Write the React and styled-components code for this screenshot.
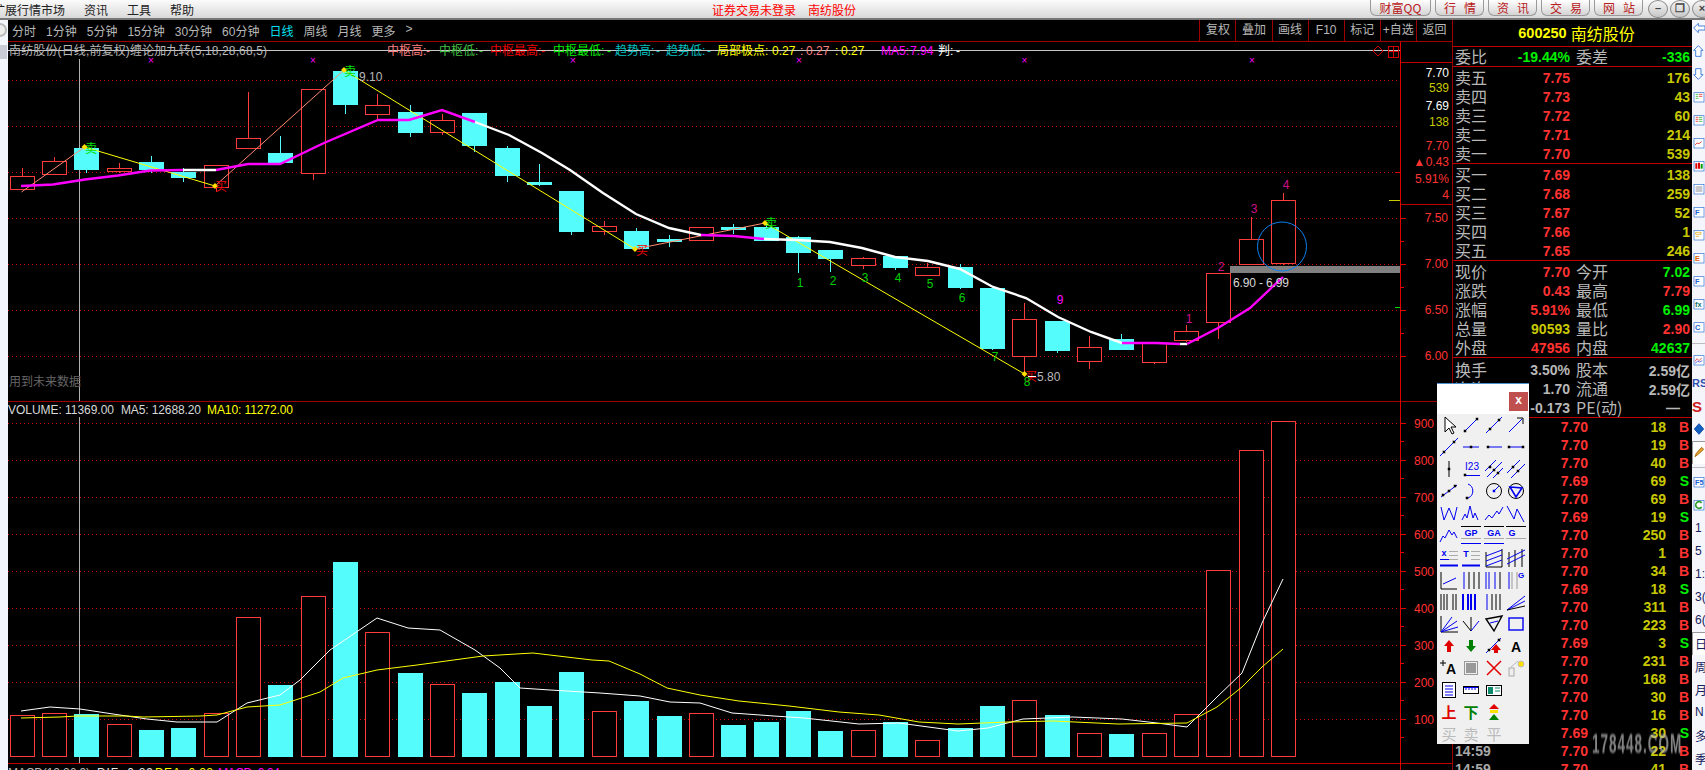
import React from 'react';
import styled, { createGlobalStyle } from 'styled-components';

const NUM = '"Liberation Sans", "Noto Sans CJK SC", sans-serif';
const CJK = '"Noto Sans CJK SC", "Liberation Sans", sans-serif';
const RED = '#ff3232';
const YEL = '#c8c800';
const GRN = '#00f000';
const GRY = '#b8b8b8';

const Global = createGlobalStyle`
  html, body { margin: 0; padding: 0; background: #000; overflow: hidden; }
`;
const Screen = styled.div`
  position: relative;
  width: 1705px;
  height: 770px;
  overflow: hidden;
  display: flex;
  flex-direction: column;
  font-family: ${CJK};
  background: #000;
`;

/* window title bar */
const TopBar = styled.div`
  flex: none;
  height: 18px;
  border-bottom: 2px solid #777;
  background: linear-gradient(#fbfbfb, #d9d9d9);
  display: flex;
  align-items: center;
  font-size: 12px;
  color: #222;
  white-space: nowrap;
`;
const Menu = styled.div`
  display: flex;
  gap: 19px;
  margin-left: -7px;
`;
const Notice = styled.div`
  display: flex;
  gap: 12px;
  margin-left: 518px;
  color: #f00;
`;
const TopLinks = styled.div`
  margin-left: auto;
  margin-right: -7px;
  display: flex;
  align-items: flex-start;
  align-self: flex-start;
  gap: 4px;
`;
const Pill = styled.div`
  width: ${p => p.$w || 49}px;
  height: 16px;
  box-sizing: border-box;
  border: 1px solid #999;
  border-top: 0;
  border-radius: 0 0 6px 6px;
  background: linear-gradient(#fff, #d4d4d4);
  color: #b82020;
  text-align: center;
  line-height: 15px;
  letter-spacing: ${p => p.$sp || 0}px;
  text-indent: ${p => p.$sp || 0}px;
`;
const Round = styled.div`
  width: 20px;
  height: 18px;
  box-sizing: border-box;
  margin-left: ${p => p.$ml || 0}px;
  border: 1px solid #888;
  border-radius: 50%;
  background: linear-gradient(#f4f4f4, #c8c8c8);
  color: #444;
  font: bold 11px/15px ${NUM}, ${CJK};
  text-align: center;
`;

const Body = styled.div`
  flex: 1;
  min-height: 0;
  display: flex;
`;
const LeftStrip = styled.div`
  flex: none;
  width: 8px;
  background: #f3f6fd;
  display: flex;
  flex-direction: column;
  gap: 8px;
  padding-top: 3px;
  overflow: hidden;
`;
const StripKnob = styled.div`
  width: 14px;
  height: 14px;
  margin-left: -7px;
  box-sizing: border-box;
  border: 2px solid #bbb;
  border-radius: 50%;
  background: #eee;
`;
const StripTab = styled.div`
  width: 7px;
  height: 14px;
  background: #c9ccd6;
`;

const Main = styled.div`
  flex: none;
  width: 1444px;
  display: flex;
  flex-direction: column;
`;
const PeriodBar = styled.div`
  flex: none;
  height: 21px;
  border-bottom: 1px solid #a00000;
  display: flex;
  align-items: center;
  font-size: 12px;
  color: ${GRY};
  white-space: nowrap;
`;
const Periods = styled.div`
  display: flex;
  gap: 10px;
  padding-left: 4px;
`;
const Period = styled.span`
  color: ${p => (p.$on ? '#00e0f0' : GRY)};
  font-family: ${NUM}, ${CJK};
`;
const Actions = styled.div`
  margin-left: auto;
  display: flex;
  height: 100%;
`;
const Action = styled.div`
  width: 36.1px;
  box-sizing: border-box;
  border-left: 1px solid #a00000;
  text-align: center;
  line-height: 21px;
  font-family: ${NUM}, ${CJK};
`;
const ChartSvg = styled.svg`
  flex: none;
  display: block;
  width: 1444px;
  height: 728px;
`;

/* quote panel */
const Panel = styled.div`
  flex: none;
  width: 240px;
  box-sizing: border-box;
  border-left: 1px solid #a00000;
  display: flex;
  flex-direction: column;
  font-size: 16px;
  color: ${GRY};
  white-space: nowrap;
`;
const Title = styled.div`
  flex: none;
  height: 26px;
  border-bottom: 1px solid #c00000;
  display: flex;
  align-items: center;
  justify-content: center;
  gap: 4px;
  padding-left: 8px;
  color: #ffff00;
`;
const Code = styled.span`
  font: bold 14.5px ${NUM};
`;
const Section = styled.div`
  flex: none;
  border-bottom: 1px solid #c00000;
  padding-top: ${p => p.$pad || 0}px;
`;
const QuoteRow = styled.div`
  height: 19px;
  display: flex;
  align-items: center;
  padding: 0 2px 0 2px;
`;
const Label = styled.span`
  flex: none;
  width: 32px;
  line-height: 19px;
`;
const Value = styled.span`
  flex: none;
  width: ${p => p.$w || 83}px;
  text-align: right;
  font: bold 14px ${NUM}, ${CJK};
  color: ${p => p.$c};
  margin-right: 6px;
`;
const Value2 = styled.span`
  flex: 1;
  text-align: right;
  font: bold 14px ${NUM}, ${CJK};
  color: ${p => p.$c};
  padding-right: ${p => p.$pr || 0}px;
`;
const Trades = styled.div`
  flex: 1;
  overflow: hidden;
`;
const TradeRow = styled.div`
  height: 18px;
  display: grid;
  grid-template-columns: 133px 78px 23px;
  padding-left: 2px;
  align-items: center;
  font: bold 14px ${NUM};
  text-align: right;
`;
const Time = styled.span`
  display: flex;
  justify-content: space-between;
  color: #a8a8a8;
`;
const Price = styled.b`
  color: ${RED};
`;
const Vol = styled.b`
  color: ${YEL};
`;
const Flag = styled.b`
  color: ${p => (p.$s ? GRN : RED)};
`;

/* right tool strip */
const RightBar = styled.div`
  flex: none;
  width: 13px;
  box-sizing: border-box;
  background: #f4f6fb;
  overflow: hidden;
  display: flex;
  flex-direction: column;
  & > :first-child { margin-top: -3.5px; }
`;
const Strip = styled.div`
  flex: none;
  height: 23px;
  display: flex;
  align-items: center;
  padding-left: ${p => p.$pl ?? 1}px;
  font: 12px ${NUM}, ${CJK};
  color: #15205c;
  background: ${p => (p.$on ? '#fff' : 'transparent')};
  box-shadow: ${p => (p.$on ? 'inset 1px 1px 0 #999' : 'none')};
  white-space: nowrap;
`;
const StripText = styled.b`
  color: ${p => p.$c};
  font-size: ${p => p.$s}px;
`;
const StripGap = styled.div`
  flex: none;
  height: ${p => p.$h}px;
  display: flex;
  align-items: center;
  &::after {
    content: '';
    width: 100%;
    border-top: 1px solid #bbb;
  }
`;

/* floating drawing tools */
const ToolBox = styled.div`
  position: absolute;
  left: 1437px;
  top: 383px;
  width: 92px;
  height: 361px;
  background: #f0f0f0;
  border-top: 1px solid #4a90d0;
  box-sizing: border-box;
`;
const ToolHead = styled.div`
  height: 30px;
  background: #fff;
  display: flex;
  justify-content: flex-end;
  align-items: flex-end;
  padding-right: 1px;
  box-sizing: border-box;
  padding-bottom: 3px;
`;
const Close = styled.div`
  width: 19px;
  height: 19px;
  background: #c0504d;
  color: #fff;
  font: bold 12px/17px ${NUM};
  text-align: center;
`;
const ToolGrid = styled.div`
  display: grid;
  grid-template-columns: repeat(4, 22.4px);
  grid-auto-rows: 22.1px;
  padding-left: 1px;
`;
const ToolIcon = styled.svg`
  display: block;
  width: 22px;
  height: 22px;
`;
const Watermark = styled.div`
  position: absolute;
  left: 1592px;
  top: 731px;
  font: bold 27px/27px ${NUM};
  color: rgba(190, 190, 190, 0.7);
  letter-spacing: 2px;
  filter: blur(0.8px);
  transform: scaleX(0.5);
  transform-origin: left top;
  white-space: nowrap;
`;

/* ------ data ------ */
const cx = i => 21.5 + 32.35 * i;
// c = cyan body, [top, bottom, high, low]
const candles = [
  ['r', 176, 189, 168, 189], ['r', 161, 174, 157, 174], ['c', 148, 170, 148, 173], ['r', 168, 171, 163, 173],
  ['c', 162, 170, 156, 173], ['c', 172, 178, 168, 182], ['r', 165, 187, 165, 192], ['r', 138, 148, 92, 148],
  ['c', 153, 163, 136, 163], ['r', 89, 173, 89, 180], ['c', 71, 105, 71, 114], ['r', 105, 114, 94, 120],
  ['c', 112, 133, 105, 137], ['r', 120, 132, 114, 135], ['c', 113, 146, 113, 152], ['c', 148, 176, 146, 182],
  ['c', 182, 185, 164, 186], ['c', 191, 232, 191, 235], ['r', 226, 231, 221, 235], ['c', 231, 249, 228, 249],
  ['c', 239, 242, 235, 247], ['r', 227, 240, 227, 241], ['c', 227, 230, 224, 234], ['c', 227, 241, 224, 241],
  ['c', 237, 253, 236, 273], ['c', 250, 259, 250, 272], ['r', 258, 265, 257, 269], ['c', 256, 268, 256, 270],
  ['r', 267, 275, 263, 275], ['c', 267, 288, 264, 289], ['c', 288, 349, 288, 350], ['r', 319, 356, 303, 375],
  ['c', 321, 351, 321, 353], ['r', 347, 361, 336, 369], ['c', 339, 350, 334, 350], ['r', 343, 362, 343, 364],
  ['r', 331, 340, 325, 342], ['r', 273, 322, 273, 339], ['r', 239, 264, 217, 264], ['r', 200, 263, 193, 265],
];
const volTops = [
  715, 713, 714, 724, 730, 728, 713, 617, 685, 596, 562, 632, 673, 684, 693, 682, 706, 672, 711, 701,
  716, 713, 725, 722, 711, 731, 730, 722, 740, 728, 706, 700, 715, 733, 734, 733, 714, 570, 450, 421,
];
const maSegments = [
  ['#ff00ff', [[21, 186], [53, 184.5], [85, 179.5], [118, 175.5], [150, 170.5], [183, 170]]],
  ['#fff', [[183, 170], [216, 170]]],
  ['#ff00ff', [[216, 170], [248, 164], [280, 164], [324, 143], [378, 120], [409, 120], [442, 110], [475, 122]]],
  ['#fff', [[475, 122], [509, 135], [542, 153], [570, 170], [603, 193], [636, 214], [669, 228], [701, 235]]],
  ['#ff00ff', [[701, 235], [734, 236], [764, 239]]],
  ['#fff', [[764, 239], [797, 240], [830, 242], [862, 248], [895, 257], [928, 261], [960, 269], [993, 287], [1026, 298], [1058, 317], [1091, 332], [1122, 343]]],
  ['#ff00ff', [[1122, 343], [1156, 343], [1180, 344]]],
  ['#fff', [[1180, 344], [1187, 344]]],
  ['#ff00ff', [[1187, 344], [1218, 328], [1250, 308], [1283, 277]]],
];
const pivots = [[21.5, 192], [84.5, 147], [215, 186], [344, 70], [635, 249], [765, 223], [1024.5, 374]];
const volWhite = [[21, 711], [50, 707], [80, 709], [113, 714], [147, 719], [177, 722], [217, 722], [247, 703], [280, 695], [300, 680], [330, 650], [377, 618], [408, 628], [440, 630], [475, 650], [500, 668], [520, 688], [550, 690], [600, 693], [640, 696], [670, 702], [700, 703], [732, 713], [774, 716], [804, 718], [859, 724], [899, 723], [958, 731], [988, 728], [1023, 719], [1073, 717], [1122, 719], [1157, 723], [1187, 727], [1217, 697], [1242, 673], [1262, 623], [1283, 579]];
const volYellow = [[21, 718], [60, 717], [77, 716], [127, 716], [143, 717], [200, 716], [217, 715], [247, 707], [280, 705], [320, 692], [343, 678], [377, 670], [417, 665], [483, 656], [533, 653], [592, 660], [609, 661], [640, 674], [667, 688], [700, 695], [739, 701], [789, 706], [839, 712], [879, 715], [919, 722], [958, 724], [1008, 722], [1053, 721], [1118, 724], [1187, 723], [1217, 707], [1242, 687], [1262, 667], [1283, 649]];
const legend = [
  [387, '中枢高:', '#ff8080'], [426, '-', '#ff8080'], [439, '中枢低:', '#40c040'], [479, '-', '#40c040'],
  [490, '中枢最高:', '#f00000'], [541, '-', '#f00000'], [553, '中枢最低:', '#00f000'], [607, '-', '#00f000'],
  [615, '趋势高:', '#00c0c0'], [656, '-', '#00c0c0'], [666, '趋势低:', '#00c0c0'], [707, '-', '#00c0c0'],
  [717, '局部极点:', '#ffff00'], [772, '0.27', '#ffff00'], [800, ':', '#ff8080'], [806, '0.27', '#ff8080'], [835, ':', '#ffff00'], [841, '0.27', '#ffff00'],
  [881, 'MA5:', '#ff00ff'], [910, '7.94', '#ff00ff'], [938, '判:', '#ffffff'], [956, '-', '#ffffff'],
];
const marks = [
  [85, 153, '卖', '#00e000'], [344, 76, '卖', '#00e000'], [765, 228, '卖', '#00e000'],
  [215, 191, '买', '#f00000'], [636, 255, '买', '#f00000'], [1025, 381, '买', '#f00000'],
];
const pts = a => a.map(p => p.join(',')).join(' ');

const Dotted = ({ y }) => (
  <line x1="8" x2="1400" y1={y + 0.5} y2={y + 0.5} stroke="#c80000" strokeDasharray="1 3" shapeRendering="crispEdges" />
);
const Txt = ({ x, y, c = GRY, size = 12, anchor, len, children, family = NUM }) => (
  <text x={x} y={y} fill={c} fontSize={size} textAnchor={anchor} textLength={len} lengthAdjust="spacing" fontFamily={family}>{children}</text>
);
const Tick = ({ y, len }) => <line x1="1401" x2={1401 + len} y1={y + 0.5} y2={y + 0.5} stroke="#e00000" shapeRendering="crispEdges" />;

const Chart = () => (
  <ChartSvg viewBox="8 42 1444 728">
    <line x1="8" x2="1400" y1="50.5" y2="50.5" stroke="#c8c8c8" shapeRendering="crispEdges" />
    <Txt x={9} y={55} len={258}>南纺股份(日线,前复权)缠论加九转(5,18,28,68,5)</Txt>
    {legend.map(([x, t, c]) => <Txt key={x} x={x} y={55} c={c}>{t}</Txt>)}
    <path d="M1378 46l5 5-5 5-5-5z" fill="none" stroke="#d00000" />
    <path d="M1388.5 46.5h10v11h-10zM1393.5 46.5v11M1388.5 51.5h10" fill="none" stroke="#d00000" shapeRendering="crispEdges" />
    {[151, 313, 573, 799, 1024.5, 1252].map(x => (
      <text key={x} x={x} y={64} fill="#ff00ff" fontSize="10" textAnchor="middle" fontFamily={NUM}>×</text>
    ))}

    {[80, 126, 172, 218, 264, 310, 356].map(y => <Dotted key={y} y={y} />)}
    <rect x="1230" y="266" width="170" height="7" fill="#808080" />
    <path d="M79.5 59V401M79.5 417V763" stroke="#b0b0b0" shapeRendering="crispEdges" />

    {candles.map(([k, top, bot, hi, lo], i) => {
      const x = Math.round(cx(i));
      return k === 'c' ? (
        <g key={i} shapeRendering="crispEdges">
          <line x1={x + 0.5} x2={x + 0.5} y1={hi} y2={lo} stroke="#54fcfc" />
          <rect x={x - 12} y={top} width="25" height={bot - top} fill="#54fcfc" />
        </g>
      ) : (
        <g key={i} shapeRendering="crispEdges">
          <line x1={x + 0.5} x2={x + 0.5} y1={hi} y2={lo} stroke="#ff3c3c" />
          <rect x={x - 11.5} y={top + 0.5} width="24" height={bot - top} fill="#000" stroke="#ff3c3c" />
        </g>
      );
    })}
    {pivots.slice(1).map((p, i) => (
      <polyline key={i} points={pts([pivots[i], p])} fill="none" stroke={i % 2 ? '#ffff00' : '#ff8a70'} />
    ))}
    {maSegments.map(([c, s], i) => <polyline key={i} points={pts(s)} fill="none" stroke={c} strokeWidth="2.4" />)}
    {pivots.slice(1).map(([x, y], i) => <path key={i} d={`M${x} ${y - 3}l3 3-3 3-3-3z`} fill="#ffe000" />)}
    {marks.map(([x, y, t, c]) => <Txt key={x} x={x} y={y} c={c} family={CJK}>{t}</Txt>)}
    <Txt x={359} y={81}>9.10</Txt>
    <line x1="1028" x2="1036" y1="376.5" y2="376.5" stroke="#fff" />
    <Txt x={1037} y={381}>5.80</Txt>
    {[[800, 287, 1], [833, 285, 2], [865, 282, 3], [898, 282, 4], [930, 288, 5], [962, 302, 6], [995, 361, 7], [1027, 386, 8]].map(([x, y, t]) => (
      <Txt key={t} x={x} y={y} c="#00d000" anchor="middle">{t}</Txt>
    ))}
    <Txt x={1060} y={304} c="#ff00ff" anchor="middle">9</Txt>
    {[[1189, 323, 1], [1221, 271, 2], [1254, 213, 3], [1286, 189, 4]].map(([x, y, t]) => (
      <Txt key={t} x={x} y={y} c="#d0108a" anchor="middle">{t}</Txt>
    ))}
    <circle cx="1282" cy="246.5" r="24.5" fill="none" stroke="#0a80f0" />
    <Txt x={1233} y={287} c="#d8d8d8" len={56}>6.90 - 6.99</Txt>
    <Txt x={9} y={386} c="#666" family={CJK}>用到未来数据</Txt>

    <line x1="8" x2="1452" y1="401.5" y2="401.5" stroke="#a00000" shapeRendering="crispEdges" />
    <Txt x={8} y={414} c="#d8d8d8" len={106}>VOLUME: 11369.00</Txt>
    <Txt x={121} y={414} c="#d8d8d8" len={80}>MA5: 12688.20</Txt>
    <Txt x={207} y={414} c="#ffff00" len={86}>MA10: 11272.00</Txt>

    {[423, 460, 497, 534, 571, 608, 645, 682, 719].map(y => <Dotted key={y} y={y} />)}
    {volTops.map((top, i) => {
      const x = Math.round(cx(i));
      return candles[i][0] === 'c' ? (
        <rect key={i} x={x - 12} y={top} width="25" height={757 - top} fill="#54fcfc" shapeRendering="crispEdges" />
      ) : (
        <rect key={i} x={x - 11.5} y={top + 0.5} width="24" height={756 - top} fill="#000" stroke="#ff3c3c" shapeRendering="crispEdges" />
      );
    })}
    <polyline points={pts(volWhite)} fill="none" stroke="#fff" />
    <polyline points={pts(volYellow)} fill="none" stroke="#ffff00" />

    <line x1="8" x2="1452" y1="763.5" y2="763.5" stroke="#c00000" shapeRendering="crispEdges" />
    <Txt x={8} y={777} len={82}>MACD(12,26,9)</Txt>
    <Txt x={97} y={777} c="#e8e8e8" len={56}>DIF: 0.29</Txt>
    <Txt x={155} y={777} c="#ffff00" len={58}>DEA: 0.22</Txt>
    <Txt x={218} y={777} c="#ff00ff" len={62}>MACD: 0.04</Txt>

    {/* price and volume axis */}
    <line x1="1400.5" x2="1400.5" y1="42" y2="770" stroke="#e00000" shapeRendering="crispEdges" />
    <line x1="1401" x2="1452" y1="62.5" y2="62.5" stroke="#c00000" shapeRendering="crispEdges" />
    <line x1="1401" x2="1452" y1="204.5" y2="204.5" stroke="#c00000" shapeRendering="crispEdges" />
    <line x1="1389" x2="1400" y1="200.5" y2="200.5" stroke="#c8c800" shapeRendering="crispEdges" />
    <line x1="1395" x2="1400" y1="307.5" y2="307.5" stroke="#00e000" shapeRendering="crispEdges" />
    <line x1="1395" x2="1400" y1="172.5" y2="172.5" stroke="#e00000" shapeRendering="crispEdges" />
    {[218, 264, 310, 356, 423, 460, 497, 534, 571, 608, 645, 682, 719].map(y => <Tick key={y} y={y} len={5} />)}
    {[241, 287, 333, 441, 478, 515, 552, 589, 626, 663, 700, 737].map(y => <Tick key={y} y={y} len={3} />)}
    {[[76.5, '7.70', '#fff'], [91.5, '539', YEL], [110, '7.69', '#fff'], [126, '138', YEL], [150, '7.70', RED], [166, '0.43', RED], [182.5, '5.91%', RED], [198.5, '4', RED]].map(([y, t, c]) => (
      <Txt key={y} x={1449} y={y} c={c} anchor="end">{t}</Txt>
    ))}
    <path d="M1416 166l3.5-7 3.5 7z" fill={RED} />
    {[[222, '7.50'], [268, '7.00'], [314, '6.50'], [360, '6.00']].map(([y, t]) => (
      <Txt key={y} x={1448} y={y} c={RED} anchor="end">{t}</Txt>
    ))}
    {[900, 800, 700, 600, 500, 400, 300, 200, 100].map((t, i) => (
      <Txt key={t} x={1414} y={427.5 + i * 37} c={RED}>{t}</Txt>
    ))}
  </ChartSvg>
);

const asks = [['卖五', '7.75', '176'], ['卖四', '7.73', '43'], ['卖三', '7.72', '60'], ['卖二', '7.71', '214'], ['卖一', '7.70', '539']];
const bids = [['买一', '7.69', '138'], ['买二', '7.68', '259'], ['买三', '7.67', '52'], ['买四', '7.66', '1'], ['买五', '7.65', '246']];
const stats = [
  ['现价', '7.70', RED, '今开', '7.02', GRN], ['涨跌', '0.43', RED, '最高', '7.79', RED], ['涨幅', '5.91%', RED, '最低', '6.99', GRN],
  ['总量', '90593', YEL, '量比', '2.90', RED], ['外盘', '47956', RED, '内盘', '42637', GRN],
];
const extra = [['换手', '3.50%', '股本', '2.59亿'], ['净资', '1.70', '流通', '2.59亿'], ['收益', '-0.173', 'PE(动)', '—']];
const trades = [
  ['7.70', 18], ['7.70', 19], ['7.70', 40], ['7.69', 69, 1], ['7.70', 69], ['7.69', 19, 1], ['7.70', 250], ['7.70', 1], ['7.70', 34], ['7.69', 18, 1],
  ['7.70', 311], ['7.70', 223], ['7.69', 3, 1], ['7.70', 231], ['7.70', 168], ['7.70', 30], ['7.70', 16], ['7.69', 30, 1], ['7.70', 22], ['7.70', 41],
];

const QuotePanel = () => (
  <Panel>
    <Title><Code>600250</Code>南纺股份</Title>
    <Section>
      <QuoteRow>
        <Label>委比</Label><Value $c={GRN}>-19.44%</Value><Label>委差</Label><Value2 $c={GRN}>-336</Value2>
      </QuoteRow>
    </Section>
    <Section $pad={1}>
      {asks.map(([l, p, n]) => (
        <QuoteRow key={l}><Label>{l}</Label><Value $c={RED}>{p}</Value><Value2 $c={YEL}>{n}</Value2></QuoteRow>
      ))}
    </Section>
    <Section $pad={1}>
      {bids.map(([l, p, n]) => (
        <QuoteRow key={l}><Label>{l}</Label><Value $c={RED}>{p}</Value><Value2 $c={YEL}>{n}</Value2></QuoteRow>
      ))}
    </Section>
    <Section $pad={1}>
      {stats.map(([l, v, c, l2, v2, c2]) => (
        <QuoteRow key={l}><Label>{l}</Label><Value $c={c}>{v}</Value><Label>{l2}</Label><Value2 $c={c2}>{v2}</Value2></QuoteRow>
      ))}
    </Section>
    <Section $pad={2}>
      {extra.map(([l, v, l2, v2]) => (
        <QuoteRow key={l}>
          <Label>{l}</Label><Value $c={GRY}>{v}</Value><Label>{l2}</Label>
          <Value2 $c={GRY} $pr={v2 === '—' ? 10 : 0}>{v2}</Value2>
        </QuoteRow>
      ))}
    </Section>
    <Trades>
      {trades.map(([p, v, s], i) => (
        <TradeRow key={i}>
          <Time>14:59<Price>{p}</Price></Time>
          <Vol>{v}</Vol>
          <Flag $s={s}>{s ? 'S' : 'B'}</Flag>
        </TradeRow>
      ))}
    </Trades>
  </Panel>
);

const B = '#0000f0';
const K = '#000';
const Ln = ({ d, c = B, w = 1 }) => <path d={d} stroke={c} strokeWidth={w} fill="none" />;
const Dot = ({ x, y, c = K }) => <rect x={x - 1.25} y={y - 1.25} width="2.5" height="2.5" fill={c} />;
const Lbl = ({ x = 11, y = 11, c = B, s = 9, weight = 'bold', children }) => (
  <text x={x} y={y} fill={c} fontSize={s} fontWeight={weight} textAnchor="middle" fontFamily={NUM}>{children}</text>
);
const Han = ({ c, children, weight = 'bold' }) => (
  <text x="11" y="17" fill={c} fontSize="15" fontWeight={weight} textAnchor="middle" fontFamily={CJK}>{children}</text>
);

const tools = [
  <path d="M7 3v15l4-4 3 6 2-1-3-6h5z" fill="#fff" stroke={K} />,
  <><Ln d="M5 17L17 5" /><Dot x={5} y={17} /><Dot x={17} y={5} /></>,
  <><Ln d="M3 19L19 3" /><Dot x={7} y={15} /><Dot x={16} y={6} /></>,
  <><Ln d="M4 18L17 5" /><Ln d="M12 4h6v6" c={K} /></>,

  <><Ln d="M2 20L20 2" /><Dot x={6} y={16} /><Dot x={16} y={6} /></>,
  <><Ln d="M3 11h16" /><Dot x={11} y={11} /></>,
  <><Ln d="M4 11h15" /><Dot x={5} y={11} /></>,
  <><Ln d="M4 11h14" /><Dot x={4} y={11} /><Dot x={18} y={11} /></>,

  <><Ln d="M11 3v16" c={K} /><Dot x={11} y={11} /></>,
  <><Lbl x={12} y={12} s={10} weight="normal">I23</Lbl><Ln d="M4 17.5h16" /><Dot x={5} y={17} /></>,
  <><Ln d="M2 13L13 2M4 19L19 4M10 20L20 10" /><Dot x={7} y={9} /><Dot x={11} y={12} /><Dot x={15} y={15} /></>,
  <><Ln d="M2 15L15 2M6 20L20 6" /><Dot x={8} y={9} /><Dot x={13} y={13} /></>,

  <><Ln d="M3 17L19 5" /><Dot x={5} y={15} /><Dot x={11} y={11} /><Dot x={17} y={6} /></>,
  <><Ln d="M8 4A7.5 7.5 0 0 1 8 18" /><Dot x={7} y={18} /></>,
  <><circle cx="11" cy="11" r="7.5" fill="none" stroke={K} /><Ln d="M11 11L16 6" /><Dot x={11} y={11} c={B} /></>,
  <><circle cx="11" cy="11" r="7.5" fill="none" stroke={K} /><Ln d="M5 7L17 8L11 17Z" w={1.6} /></>,

  <Ln d="M3 5l3 13 5-12 5 12 3-13" />,
  <Ln d="M2 18l3-6 2 4 3-12 3 12 2-5 3 7" />,
  <Ln d="M2 18l4-5 3 3 5-7 2 3 4-7" />,
  <Ln d="M2 4l7 13 3-10 7 13" />,

  <Ln d="M2 18l3-6 2 2 4-8 3 5 2-3 3 6" />,
  <><Ln d="M1 2.5h20" c={K} /><Lbl y={12}>GP</Lbl><Ln d="M1 14.5h20" c="#aaa" /><Ln d="M1 19.5h20" /></>,
  <><Ln d="M1 2.5h20" c={K} /><Lbl y={12}>GA</Lbl><Ln d="M1 14.5h20" c="#aaa" /><Ln d="M1 19.5h20" /></>,
  <><Ln d="M1 2.5h20" c={K} /><Lbl x={7} y={12}>G</Lbl><Ln d="M1 14.5h20" c="#aaa" /></>,

  <><Lbl x={6} y={9}>x</Lbl><Ln d="M11 4.5h9M11 8.5h9M11 12.5h9" c="#aaa" /><Ln d="M2 12.5h9" /><Ln d="M2 18.5h18" w={2} /></>,
  <><Lbl x={6} y={10}>T</Lbl><Ln d="M11 4.5h9M11 8.5h9M11 12.5h9" c="#aaa" /><Ln d="M2 18.5h18" w={2} /></>,
  <><Ln d="M3 5v15h16V2" c={K} /><Ln d="M3 9L19 3M3 14L19 8M3 19L19 13" /></>,
  <><Ln d="M4 5v15M10 3v17M17 2v18" c={K} /><Ln d="M2 12L20 3M2 17L20 8" /></>,

  <><Ln d="M3 3v17h16" c={K} /><Ln d="M5 15L18 9" /></>,
  <><Ln d="M4 3v17" /><Ln d="M9 3v17M14 3v17M19 3v17" c={K} /></>,
  <><Ln d="M3 3v17M6 3v17M12 3v17" /><Ln d="M17 3v17" c={K} /></>,
  <><Ln d="M4 3v17" /><Ln d="M7 3v17" c="#999" /><Lbl x={16} y={9} s={8}>G</Lbl><Ln d="M12 3v17" c="#999" /></>,

  <Ln d="M3 3v16M6 3v16M9 3v16M15 3v16M18 3v16" c={K} />,
  <Ln d="M3 3v16M8 3v16M11 3v16M15 3v16" w={2} />,
  <><Ln d="M4 3v16" /><Ln d="M9 3v16M13 3v16M17 3v16" c={K} /></>,
  <><Ln d="M2 19L20 5M2 19L20 10" /><Ln d="M2 19L20 15" c={K} /></>,

  <><Ln d="M3 3v16h17" c={K} /><Ln d="M3 19L14 4M3 19L19 8M3 19L20 14" /></>,
  <><Ln d="M11 4v14" c={K} /><Ln d="M3 8L11 18" c={K} /><Ln d="M11 18L19 8" /></>,
  <><Ln d="M3 6L19 3L11 18Z" c={K} w={1.4} /><Ln d="M7 10L15 8" /></>,
  <rect x="4" y="5" width="14" height="12" fill="none" stroke={B} strokeWidth="1.4" />,

  <path d="M11 5l5 6h-3v6H9v-6H6z" fill="#e00000" />,
  <path d="M9 5h4v6h3l-5 6-5-6h3z" fill="#008000" />,
  <><Ln d="M3 18L18 3" /><path d="M13 9l5 6h-3v3h-4v-3H8z" fill="#e00000" /><Dot x={6} y={15} /><Dot x={16} y={5} /></>,
  <Lbl y={17} c={K} s={14}>A</Lbl>,

  <><Lbl x={13} y={17} c={K} s={14}>A</Lbl><Ln d="M2 6h6M5 3v6" c={K} /></>,
  <><rect x="4.5" y="4.5" width="13" height="13" fill="#eee" stroke="#999" /><rect x="6" y="6" width="10" height="10" fill="#999" /></>,
  <Ln d="M4 4L18 18M18 4L4 18" c="#e00000" w={1.5} />,
  <><circle cx="16" cy="7" r="3" fill="#ffe000" stroke="#bbb" /><rect x="4" y="11" width="5" height="8" fill="#eee" stroke="#aaa" /><Ln d="M6 10L13 4" c="#bbb" /></>,

  <><rect x="4.5" y="3.5" width="13" height="15" fill="#fff" stroke={K} /><Ln d="M7 7h8M7 10h8M7 13h8M7 16h8" /></>,
  <><rect x="3.5" y="7.5" width="15" height="7" fill="#fff" stroke={K} /><Ln d="M4 8.5h14M6 8v3M9 8v3M12 8v3M15 8v3" /></>,
  <><rect x="3.5" y="6.5" width="15" height="10" fill="#fff" stroke={K} /><rect x="5" y="8" width="5" height="7" fill="#0a8a6a" /><Ln d="M12 9h5M12 12h5" c="#0a8a6a" /></>,
  null,

  <Han c="#e00000">上</Han>,
  <Han c="#008000">下</Han>,
  <><path d="M11 3l5 5H6z" fill="#e00000" /><rect x="7" y="9" width="8" height="3" fill="#ffe000" /><path d="M6 13h10l-5 6z" transform="rotate(180 11 16)" fill="#008000" /></>,
  null,

  <Han c="#bbb" weight="normal">买</Han>,
  <Han c="#bbb" weight="normal">卖</Han>,
  <Han c="#bbb" weight="normal">平</Han>,
  null,
];

const stripIcon = (d, c = '#2a6fd6', fill = '#fff') => (
  <svg width="18" height="20" viewBox="0 0 18 20"><path d={d} fill={fill} stroke={c} strokeWidth="1.3" /></svg>
);
const Sq = ({ children }) => (
  <svg width="18" height="20" viewBox="0 0 18 20">
    <rect x="1.5" y="3.5" width="15" height="14" fill="#fff" stroke="#2a6fd6" />
    {children}
  </svg>
);
const SqText = ({ c = '#1a5fd0', children }) => (
  <text x="3" y="15" fontSize="11" fontWeight="bold" fill={c} fontFamily={NUM}>{children}</text>
);

const RightTools = () => (
  <RightBar>
    <Strip>{stripIcon('M1 10l7-7v4h10v6H8v4z')}</Strip>
    <Strip>{stripIcon('M8 2l7 7h-3v9H4V9H1z')}</Strip>
    <Strip>{stripIcon('M4 2h8v9h3l-7 7-7-7h3z')}</Strip>
    <Strip><Sq><path d="M4 6h4M4 9h4M4 12h4" stroke="#00a000" /><path d="M9 6h5M9 9h5" stroke="#e00000" /></Sq></Strip>
    <Strip><Sq><path d="M4 6h4M4 9h4M4 12h4" stroke="#e00000" /><path d="M9 6h5M9 9h5M9 12h5" stroke="#00a000" /></Sq></Strip>
    <Strip><Sq><path d="M3 13l3-3 3 1 4-3" stroke="#e00000" fill="none" /></Sq></Strip>
    <Strip><Sq><path d="M5 6v8M9 5v9" stroke="#e00000" strokeWidth="3" /><path d="M13 7v7" stroke="#00a000" strokeWidth="3" /></Sq></Strip>
    <Strip><Sq><path d="M4 7h10M4 10h10M4 13h10" stroke="#556" /></Sq></Strip>
    <Strip><Sq><SqText>F</SqText></Sq></Strip>
    <Strip><Sq><path d="M4 6h8v3H4zM4 12h5" stroke="#e0a000" fill="none" /></Sq></Strip>
    <Strip><Sq><SqText c="#e06000">E</SqText></Sq></Strip>
    <Strip><Sq><SqText>F</SqText></Sq></Strip>
    <Strip><Sq><SqText c="#107070">fx</SqText></Sq></Strip>
    <Strip><Sq><SqText>C</SqText></Sq></Strip>
    <StripGap $h={10} />
    <Strip><Sq><path d="M3 12l3-4 3 3 4-4" stroke="#e00000" fill="none" /><path d="M3 15l4-3 3 1 4-2" stroke="#2030e0" fill="none" /></Sq></Strip>
    <Strip $pl={0}><StripText $c="#3050b0" $s={11}>RS</StripText></Strip>
    <Strip $pl={0}><StripText $c="#d02020" $s={15}>S</StripText></Strip>
    <Strip>{stripIcon('M9 2l7 8-7 8-7-8z', '#1040a0', '#1060c0')}</Strip>
    <Strip $on>{stripIcon('M3 17l2-5 8-9 3 3-9 8z', '#a06000', '#e8a030')}</Strip>
    <StripGap $h={7} />
    <Strip><Sq><SqText>F5</SqText></Sq></Strip>
    <Strip><Sq><path d="M13 7a5 5 0 1 0 0 6" stroke="#30a030" strokeWidth="2.5" fill="none" /></Sq></Strip>
    {['1', '5', '1:', '3(', '6('].map(t => <Strip key={t} $pl={3}>{t}</Strip>)}
    <Strip $pl={3} $on>日</Strip>
    {['周', '月', 'N', '多', '季'].map(t => <Strip key={t} $pl={3}>{t}</Strip>)}
  </RightBar>
);

const periods = ['分时', '1分钟', '5分钟', '15分钟', '30分钟', '60分钟', '日线', '周线', '月线', '更多', '>'];
const actions = ['复权', '叠加', '画线', 'F10', '标记', '+自选', '返回'];

export default function App() {
  return (
    <Screen>
      <Global />
      <TopBar>
        <Menu>
          <span>扩展行情市场</span><span>资讯</span><span>工具</span><span>帮助</span>
        </Menu>
        <Notice><span>证券交易未登录</span><span>南纺股份</span></Notice>
        <TopLinks>
          <Pill $w={61}>财富QQ</Pill>
          <Pill $sp={8}>行情</Pill>
          <Pill $sp={8}>资讯</Pill>
          <Pill $sp={8}>交易</Pill>
          <Pill $sp={8}>网站</Pill>
          <Round $ml={1}>–</Round>
          <Round $ml={-2}>❐</Round>
          <Round $ml={-2}>×</Round>
        </TopLinks>
      </TopBar>
      <Body>
        <LeftStrip><StripKnob /><StripTab /></LeftStrip>
        <Main>
          <PeriodBar>
            <Periods>
              {periods.map(p => <Period key={p} $on={p === '日线'}>{p}</Period>)}
            </Periods>
            <Actions>
              {actions.map(a => <Action key={a}>{a}</Action>)}
            </Actions>
          </PeriodBar>
          <Chart />
        </Main>
        <QuotePanel />
        <RightTools />
      </Body>
      <ToolBox>
        <ToolHead><Close>x</Close></ToolHead>
        <ToolGrid>
          {tools.map((t, i) => <ToolIcon key={i} viewBox="0 0 22 22">{t}</ToolIcon>)}
        </ToolGrid>
      </ToolBox>
      <Watermark>178448.COM</Watermark>
    </Screen>
  );
}
